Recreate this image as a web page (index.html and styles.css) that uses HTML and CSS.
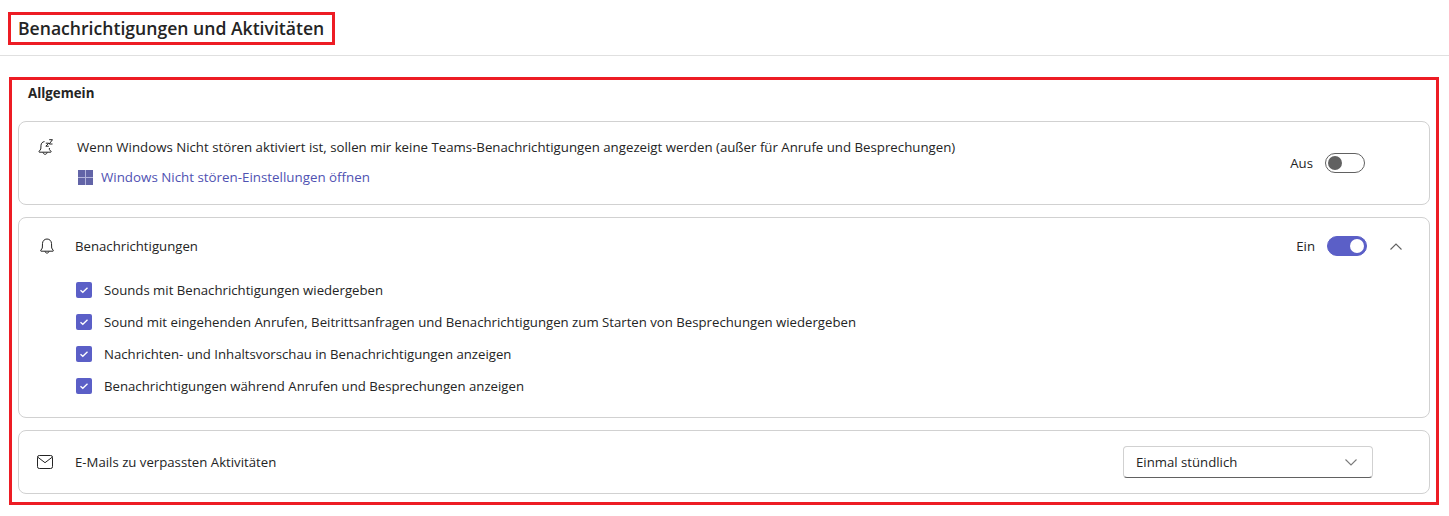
FILE: index.html
```html
<!DOCTYPE html>
<html lang="de">
<head>
  <meta charset="UTF-8">
  <title>Benachrichtigungen und Aktivitäten</title>
  <link rel="stylesheet" href="styles.css">
</head>
<body>
  <!-- Page title -->
  <header class="page-header">
    <h1 class="page-title">Benachrichtigungen und Aktivitäten</h1>
  </header>

  <main class="section">
    <h2 class="section-title">Allgemein</h2>

    <!-- Windows do not disturb -->
    <div class="card card-dnd">
      <svg class="row-icon icon-dnd" width="16" height="17" viewBox="0 0 16 17" fill="none" stroke="#242424" stroke-width="1">
        <path d="M7.500 2.600C5.500 2.800 4.200 4.200 4 6.200L3.800 10 2 12.600c-.2.3 0 .6.3.6h11.500c.3 0 .5-.3.3-.6L12.400 10.500V9"/>
        <path d="M6 13.400c.2 1.100 1.100 1.900 2.100 1.900s1.900-.8 2.100-1.900"/>
        <path d="M8.800 4.200h3L8.800 7.200h3M12.200.7h3.300L12.200 5h3.300"/>
      </svg>
      <div class="dnd-text">
        <p class="row-text dnd-line">Wenn Windows Nicht stören aktiviert ist, sollen mir keine Teams-Benachrichtigungen angezeigt werden (außer für Anrufe und Besprechungen)</p>
        <a class="dnd-link" href="#">
          <span class="win-logo"><i></i><i></i><i></i><i></i></span>
          Windows Nicht stören-Einstellungen öffnen
        </a>
      </div>
      <div class="toggle-wrap">
        <span class="row-text">Aus</span>
        <span class="toggle"></span>
      </div>
    </div>

    <!-- Notifications -->
    <div class="card card-notify">
      <div class="notify-head">
        <svg class="row-icon" width="16" height="17" viewBox="0 0 16 17" fill="none" stroke="#242424" stroke-width="1">
          <path d="M8 1C5.400 1 3.600 3 3.500 5.400L3.300 10 1.700 12.600c-.2.3 0 .6.3.6h12c.3 0 .5-.3.3-.6L12.700 10l-.2-4.600C12.400 3 10.600 1 8 1Z"/>
          <path d="M6 13.400c.2 1 1 1.700 2 1.700s1.800-.7 2-1.700"/>
        </svg>
        <span class="row-text">Benachrichtigungen</span>
        <div class="toggle-wrap">
          <span class="row-text">Ein</span>
          <span class="toggle toggle-on"></span>
          <svg class="chevron" width="12" height="7" viewBox="0 0 12 7" fill="none" stroke="#616161" stroke-width="1.1"><path d="M.5 6.500l5.500-5.500 5.500 5.500"/></svg>
        </div>
      </div>
      <ul class="checks">
        <li><span class="checkbox"><svg width="10" height="8" viewBox="0 0 10 8" fill="none" stroke="#fff" stroke-width="1.3"><path d="M1.500 4.200 3.800 6.300 8.500 1.700"/></svg></span>Sounds mit Benachrichtigungen wiedergeben</li>
        <li><span class="checkbox"><svg width="10" height="8" viewBox="0 0 10 8" fill="none" stroke="#fff" stroke-width="1.3"><path d="M1.500 4.200 3.800 6.300 8.500 1.700"/></svg></span>Sound mit eingehenden Anrufen, Beitrittsanfragen und Benachrichtigungen zum Starten von Besprechungen wiedergeben</li>
        <li><span class="checkbox"><svg width="10" height="8" viewBox="0 0 10 8" fill="none" stroke="#fff" stroke-width="1.3"><path d="M1.500 4.200 3.800 6.300 8.500 1.700"/></svg></span>Nachrichten- und Inhaltsvorschau in Benachrichtigungen anzeigen</li>
        <li><span class="checkbox"><svg width="10" height="8" viewBox="0 0 10 8" fill="none" stroke="#fff" stroke-width="1.3"><path d="M1.500 4.200 3.800 6.300 8.500 1.700"/></svg></span>Benachrichtigungen während Anrufen und Besprechungen anzeigen</li>
      </ul>
    </div>

    <!-- Missed activity mails -->
    <div class="card card-mail">
      <svg class="row-icon" width="16" height="14" viewBox="0 0 16 14" fill="none" stroke="#242424" stroke-width="1">
        <rect x="0.500" y="0.500" width="15" height="13" rx="1.800"/>
        <path d="M0.800 2.200 8 7.700l7.200-5.500"/>
      </svg>
      <span class="row-text">E-Mails zu verpassten Aktivitäten</span>
      <div class="select">
        <span class="row-text">Einmal stündlich</span>
        <svg width="12" height="7" viewBox="0 0 12 7" fill="none" stroke="#7a7a7a" stroke-width="1.1"><path d="M.5.5l5.500 5.500 5.500-5.500"/></svg>
      </div>
    </div>
  </main>
</body>
</html>
```

FILE: styles.css
```css
/* Global */
* {
  margin: 0;
  padding: 0;
  box-sizing: border-box;
}
body {
  font-family: "Open Sans", sans-serif;
  font-size: 13.2px;
  color: #242424;
  background: #fff;
}
/* Header */
.page-header {
  height: 56px;
  padding: 12px 0 0 8px;
  border-bottom: 1px solid #e0e0e0;
}
.page-title {
  display: inline-block;
  width: 327px;
  height: 33px;
  padding: 0 0 0 7px;
  border: 3px solid #ed1c24;
  font-size: 17.6px;
  font-weight: 600;
  line-height: 26px;
}
/* Red section box */
.section {
  width: 1430px;
  height: 428px;
  margin: 21px 0 0 9px;
  padding: 0 6px;
  border: 3px solid #ed1c24;
}
.section-title {
  height: 41px;
  padding: 4px 0 0 10px;
  font-size: 13.3px;
  font-weight: 700;
  line-height: 18px;
}
/* Cards */
.card {
  border: 1px solid #d1d1d1;
  border-radius: 8px;
  margin-bottom: 12px;
}
.row-text {
  font-size: 13.2px;
  line-height: 18px;
}
.row-icon {
  flex: none;
}
.card-dnd {
  display: flex;
  height: 84px;
  padding: 16px 64px 0 18px;
}
.icon-dnd {
  margin: 1px 24px 0 0;
}
.dnd-text {
  flex: 1;
}
.dnd-line {
  font-size: 13.25px;
}
.dnd-link {
  display: flex;
  align-items: center;
  gap: 8px;
  margin-top: 12px;
  color: #4f52b2;
  font-size: 13.35px;
  text-decoration: none;
  line-height: 18px;
}
.win-logo {
  display: grid;
  grid-template-columns: 7px 7px;
  grid-template-rows: 7px 7px;
  gap: 1px;
  margin-left: 1px;
  background: #b4b5dc;
}
.win-logo i {
  background: #6264a7;
}
/* Toggle */
.toggle-wrap {
  display: flex;
  align-items: center;
  gap: 12px;
  height: 20px;
}
.card-dnd .toggle-wrap {
  margin-top: 15px;
}
.toggle {
  position: relative;
  width: 40px;
  height: 20px;
  border: 1px solid #616161;
  border-radius: 10px;
}
.toggle::after {
  content: "";
  position: absolute;
  top: 2px;
  left: 2px;
  width: 14px;
  height: 14px;
  border-radius: 50%;
  background: #616161;
}
.toggle-on {
  border-color: #5b5fc7;
  background: #5b5fc7;
}
.toggle-on::after {
  left: 22px;
  background: #fff;
}
/* Notifications card */
.card-notify {
  height: 201px;
  padding: 18px 27px 0 20px;
}
.notify-head {
  display: flex;
  align-items: center;
  height: 20px;
  gap: 20px;
}
.notify-head .toggle-wrap {
  margin-left: auto;
}
.chevron {
  margin-left: 11px;
}
.checks {
  list-style: none;
  margin: 18px 0 0 37px;
}
.checks li {
  display: flex;
  align-items: center;
  gap: 12px;
  height: 32px;
  line-height: 18px;
}
.checkbox {
  display: flex;
  align-items: center;
  justify-content: center;
  width: 16px;
  height: 16px;
  border-radius: 2px;
  background: #5b5fc7;
}
/* Mail card */
.card-mail {
  display: flex;
  align-items: center;
  gap: 22px;
  height: 64px;
  padding: 0 56px 0 18px;
}
.select {
  display: flex;
  align-items: center;
  justify-content: space-between;
  width: 250px;
  height: 32px;
  margin-left: auto;
  padding: 0 15px 0 12px;
  border: 1px solid #d1d1d1;
  border-bottom-color: #616161;
  border-radius: 4px;
}
```
